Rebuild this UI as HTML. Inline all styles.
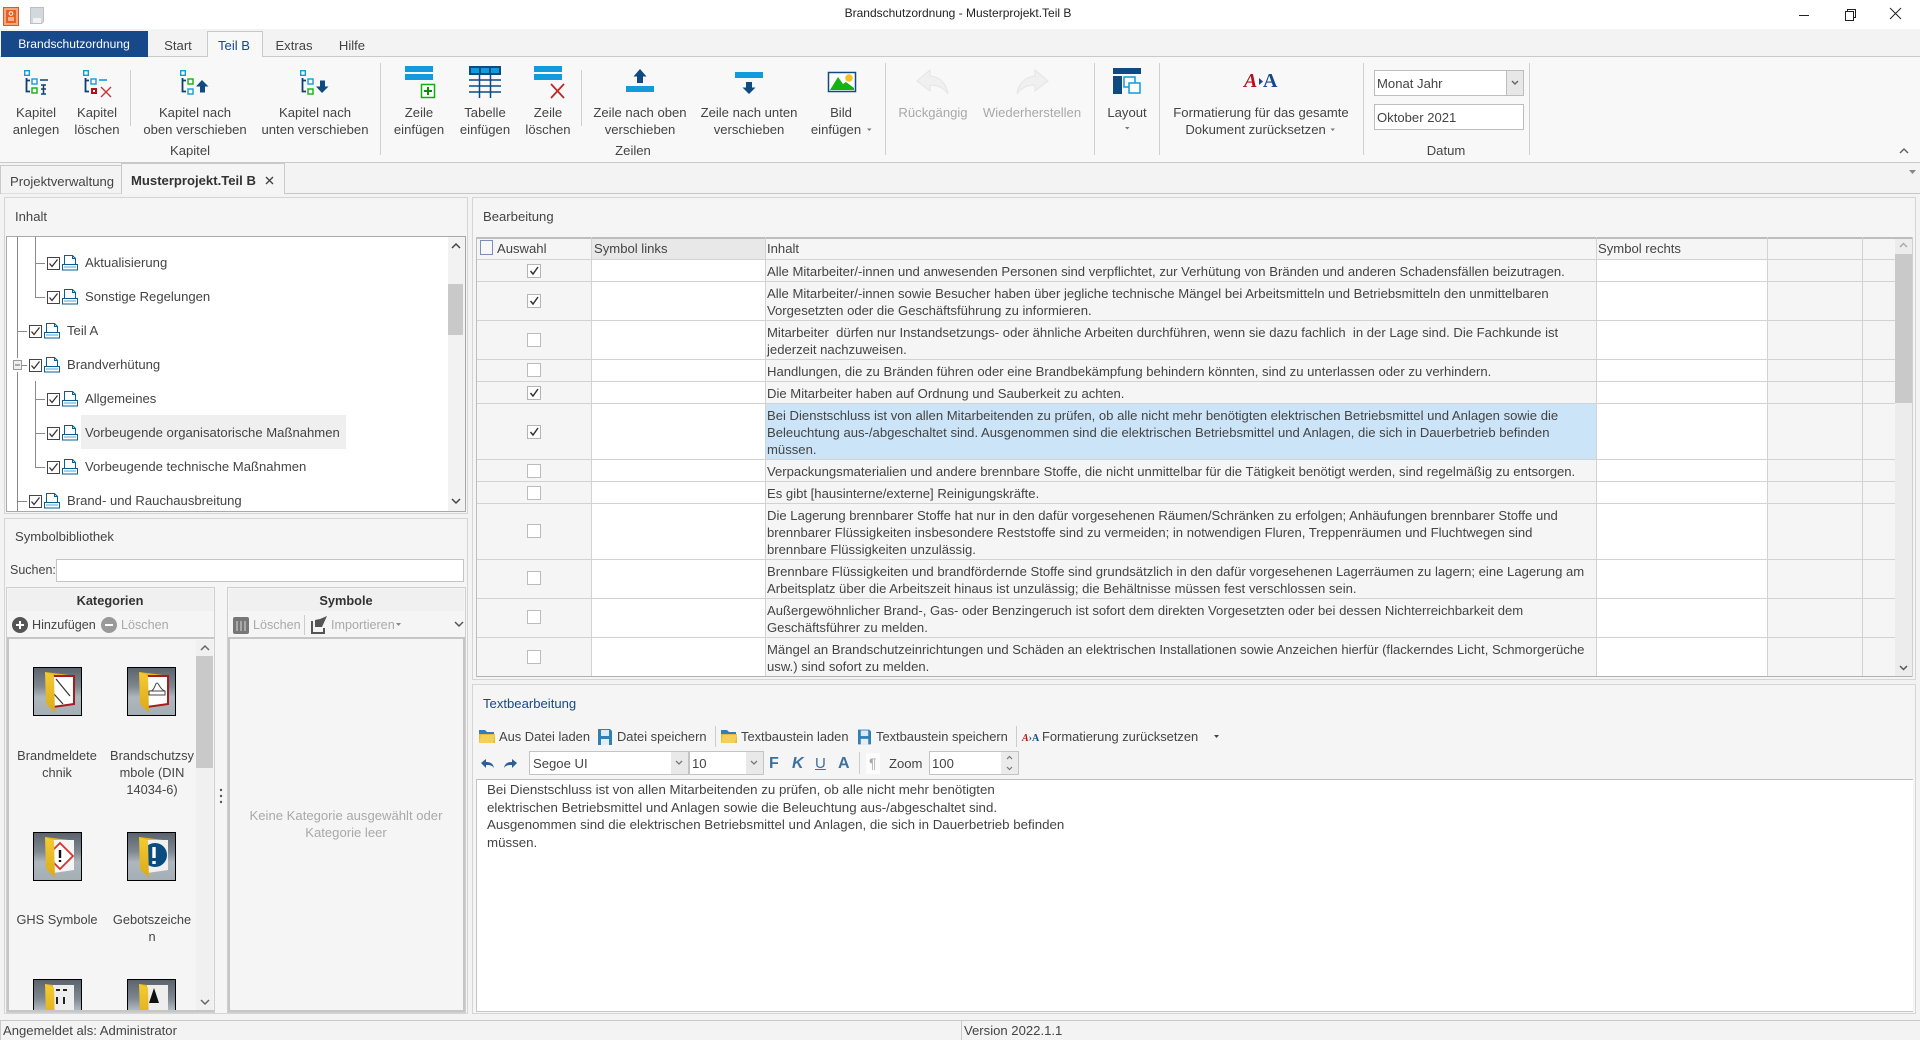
<!DOCTYPE html>
<html lang="de"><head><meta charset="utf-8"><title>Brandschutzordnung - Musterprojekt.Teil B</title>
<style>
html,body{margin:0;padding:0;width:1920px;height:1040px;overflow:hidden;background:#f3f3f3}
body{position:relative;font-family:"Liberation Sans",sans-serif;font-size:13.1px;color:#444}
svg.bg{position:absolute;left:0;top:0}
.t{position:absolute;white-space:nowrap;line-height:17px}
.c{transform:translateX(-50%);text-align:center}
.g{color:#a9a9a9}
.d{color:#333}
.b{font-weight:bold}
</style></head><body>
<svg class="bg" width="1920" height="1040" viewBox="0 0 1920 1040">
<defs>
<symbol id="on" viewBox="0 0 14 14" overflow="visible"><rect x=".5" y=".5" width="13" height="13" fill="#fff" stroke="#b5b5b5"/><path d="M3.5 7l2.5 3 5-7" fill="none" stroke="#333" stroke-width="1.5"/></symbol>
<symbol id="off" viewBox="0 0 14 14"><rect x=".5" y=".5" width="13" height="13" fill="#fff" stroke="#bbb"/></symbol>
<symbol id="tc" viewBox="0 0 13 13"><rect x=".5" y=".5" width="12" height="12" fill="#fff" stroke="#444"/><path d="M2.5 6.5l2.5 3 5.5-7" fill="none" stroke="#333" stroke-width="1.3"/></symbol>
<symbol id="doc" viewBox="0 0 16 16"><path d="M2.5 10V.5h8l3 3V10M10.500.5v3h3" fill="none" stroke="#0d5d92"/><rect x=".5" y="9.5" width="15" height="5.500" fill="#fff" stroke="#0d5d92"/><path d="M2 12h12" stroke="#49a6d4"/></symbol>
<symbol id="tree" viewBox="0 0 14 25"><rect x=".7" y=".7" width="4.6" height="4.6" fill="#fff" stroke="#139bd8" stroke-width="1.4"/><path d="M2.5 8v13.5H6M2.5 10.5H6" fill="none" stroke="#123f72" stroke-width="1.8"/></symbol>
<symbol id="save" viewBox="0 0 14 16"><path d="M0 0h12l2 2v14H0z" fill="#2f7fb8"/><rect x="3" y="1" width="8" height="6" fill="#dceaf5"/><rect x="3" y="10" width="8" height="6" fill="#e6eef5"/></symbol>
<symbol id="fold" viewBox="0 0 16 15"><path d="M0 3V1h6l2 2h7v3H0z" fill="#2f7fb8"/><path d="M0 14V5h16v9z" fill="#e8b93a"/><path d="M0 14l2-8h14l-2 8z" fill="#f5cf5c"/></symbol>
<linearGradient id="fg" x1="0" y1="0" x2="0" y2="1"><stop offset="0" stop-color="#5a636d"/><stop offset=".4" stop-color="#7f8890"/><stop offset=".62" stop-color="#aeb7bd"/><stop offset="1" stop-color="#a4aeb5"/></linearGradient>
<linearGradient id="yg" x1="0" y1="0" x2="0" y2="1"><stop offset="0" stop-color="#f4cb33"/><stop offset="1" stop-color="#dba918"/></linearGradient>
<symbol id="fb" viewBox="0 0 49 49"><rect x=".5" y=".5" width="48" height="48" fill="url(#fg)" stroke="#000"/><path d="M12 5l24 3v2H20z" fill="#e8b91f"/></symbol>
<symbol id="door" viewBox="0 0 49 49"><path d="M12 5l9 3.500 1 37.500-9-9z" fill="url(#yg)"/></symbol>
<clipPath id="lc"><rect x="8" y="640" width="188" height="370"/></clipPath>
</defs>

<!-- chrome backgrounds -->
<rect width="1920" height="29" fill="#fff"/>
<rect y="29" width="1920" height="27" fill="#f3f3f3"/>
<rect y="56" width="1920" height="107" fill="#f8f8f8"/>
<rect y="56" width="1920" height="1" fill="#c9c9c9"/>
<rect y="162" width="1920" height="1" fill="#c9c9c9"/>
<rect y="193" width="1920" height="1" fill="#c9c9c9"/>
<rect x="1" y="31" width="147" height="26" fill="#17488a"/>
<path d="M207.500 57V31.500h55V57" fill="#f8f8f8" stroke="#c9c9c9"/><rect x="208" y="55" width="54" height="3" fill="#f8f8f8"/>

<!-- title icons -->
<rect x="3.500" y="7.500" width="15" height="18" fill="#f4a77e" stroke="#e25a20"/><rect x="6" y="10" width="10" height="13" fill="#e85f22"/><path d="M8 18h6M8 20h6" stroke="#fff"/><circle cx="11" cy="13.500" r="1.800" fill="none" stroke="#fff"/>
<path d="M30.500 7.500h13v14l-2 2h-11z" fill="#d3d8dd" stroke="#b9bfc5"/><rect x="33" y="18" width="8" height="5" fill="#f2f2f2"/>
<!-- window controls -->
<rect x="1799" y="15" width="10" height="1" fill="#222"/>
<path d="M1845.500 11.500h8v9h-8zM1847.500 11.500v-2h8v8h-2" fill="none" stroke="#222"/>
<path d="M1890 8l11 11M1901 8l-11 11" stroke="#222" fill="none"/>

<!-- ribbon separators -->
<g fill="#cfcfcf"><rect x="130" y="70" width="1" height="56"/><rect x="380" y="63" width="1" height="92"/><rect x="581" y="70" width="1" height="56"/><rect x="885" y="63" width="1" height="92"/><rect x="1094" y="63" width="1" height="92"/><rect x="1159" y="63" width="1" height="92"/><rect x="1363" y="63" width="1" height="92"/><rect x="1529" y="63" width="1" height="92"/></g>

<!-- Kapitel anlegen -->
<use href="#tree" x="24" y="70" width="14" height="25"/>
<rect x="32" y="79" width="5" height="5" fill="#fff" stroke="#139bd8" stroke-width="1.400"/><rect x="32" y="88" width="5" height="5" fill="#fff" stroke="#10b10e" stroke-width="1.400"/>
<path d="M40 80h8M41 85h5M43.500 85v9M41 94h5M41 89h5" stroke="#123f72" stroke-width="1.500" fill="none"/>
<!-- Kapitel loeschen -->
<use href="#tree" x="83" y="70" width="14" height="25"/>
<rect x="91" y="79" width="5" height="5" fill="#fff" stroke="#139bd8" stroke-width="1.400"/><rect x="91" y="88" width="6" height="6" fill="#b1101c"/><rect x="93" y="90" width="2" height="2" fill="#fff"/>
<path d="M99 80h8" stroke="#139bd8" stroke-width="1.600"/><path d="M101 87l10 10M111 87l-10 10" stroke="#c33" stroke-width="1.400"/>
<!-- Kapitel hoch -->
<use href="#tree" x="180" y="70" width="14" height="25"/>
<rect x="188" y="79" width="5" height="5" fill="#fff" stroke="#10b10e" stroke-width="1.400"/><rect x="188" y="89" width="5" height="5" fill="#fff" stroke="#139bd8" stroke-width="1.400"/>
<path d="M202 80l6.500 6.500H205v6h-5v-6h-4z" fill="#0f4a80"/>
<!-- Kapitel runter -->
<use href="#tree" x="300" y="70" width="14" height="25"/>
<rect x="308" y="79" width="5" height="5" fill="#fff" stroke="#139bd8" stroke-width="1.400"/><rect x="308" y="89" width="5" height="5" fill="#fff" stroke="#10b10e" stroke-width="1.400"/>
<path d="M322 93l6.500-6.500H325v-6h-5v6h-4z" fill="#0f4a80"/>
<!-- Zeile einfuegen -->
<rect x="405" y="66" width="28" height="6" fill="#119bdc"/><rect x="405" y="74" width="28" height="6" fill="#119bdc"/>
<rect x="421.500" y="84.500" width="13" height="13" fill="#fff" stroke="#0bb10b" stroke-width="1.500"/><path d="M428 87v8M424 91h8" stroke="#0a8f0a" stroke-width="2"/>
<!-- Tabelle -->
<rect x="469" y="66" width="32" height="9" fill="#0f4a80"/><rect x="471" y="68" width="8" height="5" fill="#119bdc"/><rect x="481" y="68" width="8" height="5" fill="#119bdc"/><rect x="491" y="68" width="8" height="5" fill="#119bdc"/>
<path d="M469 80h32M469 86h32M469 92h32" stroke="#0f4a80" stroke-width="1.500"/><path d="M479.500 75v23M490.500 75v23" stroke="#0f4a80" stroke-width="1.500"/>
<!-- Zeile loeschen -->
<rect x="534" y="66" width="28" height="6" fill="#119bdc"/><rect x="534" y="74" width="28" height="6" fill="#119bdc"/>
<path d="M551 84l13 14M564 84l-13 14" stroke="#b92a2a" stroke-width="1.800"/>
<!-- Zeile hoch -->
<rect x="626" y="86" width="28" height="6" fill="#119bdc"/><path d="M640 69l6.500 7.500H643V83h-6v-6.500h-3.500z" fill="#0f4a80"/>
<!-- Zeile runter -->
<rect x="735" y="72" width="28" height="6" fill="#119bdc"/><path d="M749 94l6.500-6.500H752V82h-6v5.500h-3.500z" fill="#0f4a80"/>
<!-- Bild -->
<rect x="828.500" y="72.500" width="27" height="19" fill="#fff" stroke="#0f4a80" stroke-width="1.500"/><path d="M830 90l8-13 5 7 3-2 8 6v2z" fill="#12b312"/><circle cx="849" cy="78" r="3.800" fill="#f4c020"/>
<!-- undo redo -->
<path d="M917 81l13-11v6c11 1 17 9 18 18-4-6-10-9-18-9v6z" fill="#f0f0f0" stroke="#e5e5e5"/>
<path d="M1048 81l-13-11v6c-11 1-17 9-18 18 4-6 10-9 18-9v6z" fill="#f0f0f0" stroke="#e5e5e5"/>
<!-- Layout -->
<rect x="1113" y="68" width="28" height="6" fill="#0f4a80"/><rect x="1113" y="76" width="9" height="18" fill="#0f4a80"/>
<rect x="1124" y="77" width="11" height="10" fill="#fff" stroke="#119bdc" stroke-width="1.500"/><rect x="1129" y="83" width="11" height="10" fill="#fff" stroke="#119bdc" stroke-width="1.500"/>
<path d="M1259 78l4 3.500-4 3.500z" fill="#17488a"/>

<!-- small arrows -->
<path d="M867 128.500h4.500l-2.250 2.500zM1125 127h4.500l-2.250 2.500zM1330.500 128.500h4.500l-2.250 2.500z" fill="#777"/>
<path d="M1900 153l4-4 4 4" fill="none" stroke="#666" stroke-width="1.500"/>
<path d="M1909 170h7l-3.500 4z" fill="#888"/>

<!-- date inputs -->
<rect x="1374.500" y="70.500" width="149" height="25" fill="#fff" stroke="#bdbdbd"/><rect x="1507" y="71" width="16" height="24" fill="#e7e7e7"/><rect x="1506" y="71" width="1" height="24" fill="#bdbdbd"/><path d="M1512 81l3 3 3-3" fill="none" stroke="#666" stroke-width="1.400"/>
<rect x="1374.500" y="104.500" width="149" height="25" fill="#fff" stroke="#bdbdbd"/>

<!-- document tabs -->
<path d="M.5 193.500V165.500h121V193.500" fill="#f3f3f3" stroke="#c9c9c9"/>
<path d="M121.500 194V163.500h163V194" fill="#f5f5f5" stroke="#c9c9c9"/><rect x="122" y="192" width="162" height="3" fill="#f5f5f5"/>
<path d="M266 177l7 7M273 177l-7 7" stroke="#444" stroke-width="1.400"/>

<!-- Inhalt panel -->
<rect x="4.500" y="197.500" width="463" height="316" fill="#f5f5f5" stroke="#d5d5d5"/>
<rect x="6.500" y="236.500" width="459" height="275" fill="#fff" stroke="#a9a9a9"/>
<rect x="448" y="237" width="17" height="274" fill="#f2f2f2"/><rect x="448" y="284" width="15" height="51" fill="#c9c9c9"/>
<path d="M452 248l4-4 4 4M452 499l4 4 4-4" fill="none" stroke="#444" stroke-width="1.500"/>
<rect x="81" y="415" width="265" height="34" fill="#efefef"/>
<g stroke="#8a8a8a" fill="none">
<path d="M17.500 237V358M17.500 372V511M17.500 331.500H27M22 365.500H27M17.500 501.500H27"/>
<path d="M35.500 237V297.500H45M35.500 263.500H45M35.500 381V467.500H45M35.500 399.500H45M35.500 433.500H45"/>
</g>
<rect x="13.500" y="360.500" width="8" height="9" fill="#eee" stroke="#9a9a9a"/><path d="M15 365h5" stroke="#666"/>
<g>
<use href="#tc" x="47" y="257" width="13" height="13"/><use href="#doc" x="62" y="255" width="16" height="16"/>
<use href="#tc" x="47" y="291" width="13" height="13"/><use href="#doc" x="62" y="289" width="16" height="16"/>
<use href="#tc" x="29" y="325" width="13" height="13"/><use href="#doc" x="44" y="323" width="16" height="16"/>
<use href="#tc" x="29" y="359" width="13" height="13"/><use href="#doc" x="44" y="357" width="16" height="16"/>
<use href="#tc" x="47" y="393" width="13" height="13"/><use href="#doc" x="62" y="391" width="16" height="16"/>
<use href="#tc" x="47" y="427" width="13" height="13"/><use href="#doc" x="62" y="425" width="16" height="16"/>
<use href="#tc" x="47" y="461" width="13" height="13"/><use href="#doc" x="62" y="459" width="16" height="16"/>
<use href="#tc" x="29" y="495" width="13" height="13"/><use href="#doc" x="44" y="493" width="16" height="16"/>
</g>

<!-- Symbolbibliothek panel -->
<rect x="4.500" y="518.500" width="463" height="495" fill="#f5f5f5" stroke="#d5d5d5"/>
<rect x="56.500" y="559.500" width="407" height="22" fill="#fff" stroke="#c4c4c4"/>
<rect x="6.500" y="587.500" width="208" height="425" fill="#f5f5f5" stroke="#cfcfcf"/>
<rect x="227.500" y="587.500" width="238" height="425" fill="#f5f5f5" stroke="#cfcfcf"/>
<rect x="8" y="589" width="205" height="22" fill="#f0f0f0"/><rect x="229" y="589" width="235" height="22" fill="#f0f0f0"/>
<g fill="#c6c6c6">
<rect x="7" y="637" width="207" height="2"/><rect x="228" y="637" width="237" height="2"/>
<rect x="7" y="1010" width="207" height="2"/><rect x="228" y="1010" width="237" height="2"/>
<rect x="7" y="638" width="2" height="373"/><rect x="228" y="638" width="2" height="373"/><rect x="463" y="638" width="2" height="373"/>
</g>
<rect x="196" y="640" width="17" height="370" fill="#f0f0f0"/><rect x="196" y="656" width="17" height="112" fill="#c9c9c9"/>
<path d="M201 650l4-4 4 4M201 1000l4 4 4-4" fill="none" stroke="#666" stroke-width="1.500"/>
<circle cx="20" cy="625" r="8" fill="#555"/><path d="M16 625h8M20 621v8" stroke="#fff" stroke-width="2"/>
<circle cx="109" cy="625" r="8" fill="#999"/><path d="M105 625h8" stroke="#fff" stroke-width="2"/>
<rect x="233" y="617" width="16" height="17" rx="2" fill="#777"/><path d="M237 621v10M241 621v10M245 621v10" stroke="#ddd"/>
<rect x="304" y="615" width="1" height="20" fill="#ccc"/>
<path d="M312 621v12h12v-5" fill="none" stroke="#555" stroke-width="2"/><path d="M327 616l-5 11h-7v-7l5-1" fill="#555"/>
<path d="M396 623h5l-2.500 3z" fill="#888"/><path d="M455 622l4 4 4-4" fill="none" stroke="#555" stroke-width="1.500"/>
<circle cx="221" cy="790" r="1.200" fill="#555"/><circle cx="221" cy="796" r="1.200" fill="#555"/><circle cx="221" cy="802" r="1.200" fill="#555"/>

<!-- folder icons -->
<g clip-path="url(#lc)">
<use href="#fb" x="33" y="667" width="49" height="49"/>
<path d="M53 676h21v28l-21 3z" fill="#fff" stroke="#a41c1c" stroke-width="2"/><path d="M56 679l14 17M54 694l9 10" stroke="#333" stroke-width="1.200"/><use href="#door" x="33" y="667" width="49" height="49"/>
<use href="#fb" x="127" y="667" width="49" height="49"/>
<path d="M147 676h21v28l-21 3z" fill="#fff" stroke="#a41c1c" stroke-width="2"/><path d="M151 691c4-1 4-8 6-8s3 7 8 8M149 691h16v4h-16z" fill="none" stroke="#444"/><use href="#door" x="127" y="667" width="49" height="49"/>
<use href="#fb" x="33" y="832" width="49" height="49"/>
<path d="M53 840h21v30l-21 3z" fill="#f5f5f5"/><path d="M60 843l13 13-13 13-13-13z" fill="#fff" stroke="#d8322c" stroke-width="1.800"/><path d="M60 850v8M60 860v2" stroke="#111" stroke-width="2.400"/><use href="#door" x="33" y="832" width="49" height="49"/>
<use href="#fb" x="127" y="832" width="49" height="49"/>
<path d="M147 840h21v30l-21 3z" fill="#f0f0f0"/><circle cx="155" cy="855" r="12" fill="#0b4c80"/><path d="M154 847v11M154 861v3" stroke="#fff" stroke-width="3.400"/><use href="#door" x="127" y="832" width="49" height="49"/>
<use href="#fb" x="33" y="979" width="49" height="49"/>
<path d="M53 985h21v30H53z" fill="#eee"/><path d="M56 990h4M63 990h4M57 997v7M64 997v7" stroke="#222" stroke-width="2"/><use href="#door" x="33" y="979" width="49" height="49"/>
<use href="#fb" x="127" y="979" width="49" height="49"/>
<path d="M147 985h21v30h-21z" fill="#eee"/><path d="M154 988l5 15h-10z" fill="#111"/><use href="#door" x="127" y="979" width="49" height="49"/>
</g>

<!-- Bearbeitung panel -->
<rect x="472.500" y="197.500" width="1443" height="482" fill="#f5f5f5" stroke="#d5d5d5"/>
<rect x="476" y="237" width="1419" height="439" fill="#f5f5f5"/>
<rect x="476" y="237" width="1436" height="2" fill="#bdbdbd"/>
<rect x="592" y="259" width="173" height="417" fill="#fff"/>
<rect x="1597" y="259" width="170" height="417" fill="#fff"/>
<rect x="592" y="239" width="173" height="20" fill="#e8e8e8"/>
<rect x="766" y="404" width="830" height="55" fill="#cce4f7"/>
<g fill="#d2d2d2">
<rect x="476" y="259" width="1419" height="1"/><rect x="476" y="281" width="1419" height="1"/><rect x="476" y="320" width="1419" height="1"/><rect x="476" y="359" width="1419" height="1"/><rect x="476" y="381" width="1419" height="1"/><rect x="476" y="403" width="1419" height="1"/><rect x="476" y="459" width="1419" height="1"/><rect x="476" y="481" width="1419" height="1"/><rect x="476" y="503" width="1419" height="1"/><rect x="476" y="559" width="1419" height="1"/><rect x="476" y="598" width="1419" height="1"/><rect x="476" y="637" width="1419" height="1"/>
<rect x="591" y="237" width="1" height="439"/><rect x="765" y="237" width="1" height="439"/><rect x="1596" y="237" width="1" height="439"/><rect x="1767" y="237" width="1" height="439"/><rect x="1862" y="237" width="1" height="439"/>
</g>
<rect x="476" y="676" width="1436" height="1" fill="#b0b0b0"/><rect x="476" y="237" width="1" height="440" fill="#bdbdbd"/><rect x="1912" y="237" width="1" height="440" fill="#d0d0d0"/>
<rect x="1895" y="239" width="17" height="437" fill="#ececec"/><rect x="1895" y="254" width="17" height="149" fill="#c9c9c9"/>
<path d="M1900 247l3.500-3.500 3.500 3.500" fill="none" stroke="#aaa" stroke-width="1.500"/><path d="M1900 666l3.500 3.500 3.500-3.500" fill="none" stroke="#555" stroke-width="1.500"/>
<rect x="480.500" y="240.500" width="12" height="14" fill="#f5f7fb" stroke="#7a8fb5"/>
<use href="#on" x="527" y="264" width="14" height="14"/>
<use href="#on" x="527" y="294" width="14" height="14"/>
<use href="#off" x="527" y="333" width="14" height="14"/>
<use href="#off" x="527" y="363" width="14" height="14"/>
<use href="#on" x="527" y="386" width="14" height="14"/>
<use href="#on" x="527" y="425" width="14" height="14"/>
<use href="#off" x="527" y="464" width="14" height="14"/>
<use href="#off" x="527" y="486" width="14" height="14"/>
<use href="#off" x="527" y="524" width="14" height="14"/>
<use href="#off" x="527" y="571" width="14" height="14"/>
<use href="#off" x="527" y="610" width="14" height="14"/>
<use href="#off" x="527" y="650" width="14" height="14"/>

<!-- Textbearbeitung panel -->
<rect x="472.500" y="684.500" width="1443" height="329" fill="#f5f5f5" stroke="#d5d5d5"/>
<rect x="476" y="779" width="1437" height="233" fill="#fff"/><rect x="476" y="779" width="1437" height="1" fill="#bdbdbd"/><rect x="476" y="1011" width="1437" height="1" fill="#c5c5c5"/><rect x="476" y="779" width="1" height="233" fill="#c5c5c5"/>
<use href="#fold" x="479" y="729" width="16" height="15"/>
<use href="#save" x="598" y="729" width="14" height="16"/>
<rect x="715" y="726" width="1" height="21" fill="#ccc"/>
<use href="#fold" x="721" y="729" width="16" height="15"/>
<use href="#save" x="858" y="729" width="13" height="16"/>
<rect x="1016" y="726" width="1" height="21" fill="#ccc"/>
<path d="M1214 735h5l-2.500 3z" fill="#444"/>
<path d="M481 763l5-4v3c4 0 7 1 8 6-2-3-5-3-8-3v3z" fill="#2b5f95"/>
<path d="M517 763l-5-4v3c-4 0-7 1-8 6 2-3 5-3 8-3v3z" fill="#2b5f95"/>
<rect x="529.500" y="751.500" width="159" height="23" fill="#fff" stroke="#c4c4c4"/><rect x="671" y="752" width="17" height="22" fill="#e9e9e9"/><path d="M676 761l3 3 3-3" fill="none" stroke="#777" stroke-width="1.300"/>
<rect x="689.500" y="751.500" width="74" height="23" fill="#fff" stroke="#c4c4c4"/><rect x="746" y="752" width="17" height="22" fill="#e9e9e9"/><path d="M751 761l3 3 3-3" fill="none" stroke="#777" stroke-width="1.300"/>
<rect x="859" y="752" width="1" height="22" fill="#ccc"/>
<rect x="866" y="753" width="14" height="21" fill="#fcfcfc"/>
<rect x="929.500" y="751.500" width="89" height="23" fill="#fff" stroke="#c4c4c4"/><rect x="1001" y="752" width="17" height="22" fill="#ebebeb"/><path d="M1007 759l2.500-2.500 2.500 2.500M1007 767l2.500 2.500 2.500-2.500" fill="none" stroke="#777" stroke-width="1.200"/>

<!-- status bar -->
<rect y="1020" width="1920" height="20" fill="#f3f3f3"/><rect y="1020" width="1920" height="1" fill="#c9c9c9"/><rect x="0" y="1020" width="1" height="20" fill="#c9c9c9"/><rect x="961" y="1020" width="1" height="20" fill="#c9c9c9"/>
</svg>

<!-- title + tabs -->
<div class="t c" style="left:958px;top:5px;color:#222;font-size:12px">Brandschutzordnung - Musterprojekt.Teil B</div>
<div class="t c" style="left:74px;top:36px;color:#fff;font-size:12.1px">Brandschutzordnung</div>
<div class="t c" style="left:178px;top:37px">Start</div>
<div class="t c" style="left:234px;top:37px;color:#17488a">Teil B</div>
<div class="t c" style="left:294px;top:37px">Extras</div>
<div class="t c" style="left:352px;top:37px">Hilfe</div>

<!-- ribbon labels -->
<div class="t c" style="left:36px;top:104px">Kapitel<br>anlegen</div>
<div class="t c" style="left:97px;top:104px">Kapitel<br>löschen</div>
<div class="t c" style="left:195px;top:104px">Kapitel nach<br>oben verschieben</div>
<div class="t c" style="left:315px;top:104px">Kapitel nach<br>unten verschieben</div>
<div class="t c" style="left:419px;top:104px">Zeile<br>einfügen</div>
<div class="t c" style="left:485px;top:104px">Tabelle<br>einfügen</div>
<div class="t c" style="left:548px;top:104px">Zeile<br>löschen</div>
<div class="t c" style="left:640px;top:104px">Zeile nach oben<br>verschieben</div>
<div class="t c" style="left:749px;top:104px">Zeile nach unten<br>verschieben</div>
<div class="t c" style="left:841px;top:104px">Bild<br><span style="margin-right:10px">einfügen</span></div>
<div class="t c g" style="left:933px;top:104px">Rückgängig</div>
<div class="t c g" style="left:1032px;top:104px">Wiederherstellen</div>
<div class="t c" style="left:1127px;top:104px">Layout</div>
<div class="t c" style="left:1261px;top:104px">Formatierung für das gesamte<br>Dokument zurücksetzen&nbsp;&nbsp;&nbsp;</div>
<div class="t c" style="left:190px;top:142px">Kapitel</div>
<div class="t c" style="left:633px;top:142px">Zeilen</div>
<div class="t c" style="left:1446px;top:142px">Datum</div>
<div class="t" style="left:1377px;top:75px">Monat Jahr</div>
<div class="t" style="left:1377px;top:109px">Oktober 2021</div>
<div class="t" style="left:1263px;top:69px;font-family:'Liberation Serif',serif;font-size:20px;line-height:24px;font-weight:bold;color:#17488a">A</div>
<div class="t" style="left:1244px;top:69px;font-family:'Liberation Serif',serif;font-size:20px;line-height:24px;font-weight:bold;font-style:italic;color:#b3121d">A</div>

<!-- doc tabs -->
<div class="t" style="left:10px;top:173px">Projektverwaltung</div>
<div class="t b" style="left:131px;top:172px;color:#333">Musterprojekt.Teil B</div>

<!-- Inhalt -->
<div class="t" style="left:15px;top:208px">Inhalt</div>
<div class="t" style="left:85px;top:254px">Aktualisierung</div>
<div class="t" style="left:85px;top:288px">Sonstige Regelungen</div>
<div class="t" style="left:67px;top:322px">Teil A</div>
<div class="t" style="left:67px;top:356px">Brandverhütung</div>
<div class="t" style="left:85px;top:390px">Allgemeines</div>
<div class="t" style="left:85px;top:424px">Vorbeugende organisatorische Maßnahmen</div>
<div class="t" style="left:85px;top:458px">Vorbeugende technische Maßnahmen</div>
<div class="t" style="left:67px;top:492px">Brand- und Rauchausbreitung</div>

<!-- Symbolbibliothek -->
<div class="t" style="left:15px;top:528px">Symbolbibliothek</div>
<div class="t" style="left:10px;top:562px;font-size:12.5px">Suchen:</div>
<div class="t c b" style="left:110px;top:592px;color:#333;font-size:12.8px">Kategorien</div>
<div class="t c b" style="left:346px;top:592px;color:#333;font-size:12.8px">Symbole</div>
<div class="t" style="left:32px;top:617px;font-size:12.6px">Hinzufügen</div>
<div class="t g" style="left:121px;top:617px;font-size:12.6px">Löschen</div>
<div class="t g" style="left:253px;top:617px;font-size:12.6px">Löschen</div>
<div class="t g" style="left:331px;top:617px;font-size:12.6px">Importieren</div>
<div class="t c" style="left:57px;top:747px;font-size:12.8px">Brandmeldete<br>chnik</div>
<div class="t c" style="left:152px;top:747px;font-size:12.8px">Brandschutzsy<br>mbole (DIN<br>14034-6)</div>
<div class="t c" style="left:57px;top:911px;font-size:12.8px">GHS Symbole</div>
<div class="t c" style="left:152px;top:911px;font-size:12.8px">Gebotszeiche<br>n</div>
<div class="t c g" style="left:346px;top:807px">Keine Kategorie ausgewählt oder<br>Kategorie leer</div>

<!-- Bearbeitung -->
<div class="t" style="left:483px;top:208px">Bearbeitung</div>
<div class="t" style="left:497px;top:240px">Auswahl</div>
<div class="t" style="left:594px;top:240px">Symbol links</div>
<div class="t" style="left:767px;top:240px">Inhalt</div>
<div class="t" style="left:1598px;top:240px">Symbol rechts</div>
<div class="t" style="left:767px;top:263px">Alle Mitarbeiter/-innen und anwesenden Personen sind verpflichtet, zur Verhütung von Bränden und anderen Schadensfällen beizutragen.</div>
<div class="t" style="left:767px;top:285px">Alle Mitarbeiter/-innen sowie Besucher haben über jegliche technische Mängel bei Arbeitsmitteln und Betriebsmitteln den unmittelbaren<br>Vorgesetzten oder die Geschäftsführung zu informieren.</div>
<div class="t" style="left:767px;top:324px">Mitarbeiter&nbsp; dürfen nur Instandsetzungs- oder ähnliche Arbeiten durchführen, wenn sie dazu fachlich&nbsp; in der Lage sind. Die Fachkunde ist<br>jederzeit nachzuweisen.</div>
<div class="t" style="left:767px;top:363px">Handlungen, die zu Bränden führen oder eine Brandbekämpfung behindern könnten, sind zu unterlassen oder zu verhindern.</div>
<div class="t" style="left:767px;top:385px">Die Mitarbeiter haben auf Ordnung und Sauberkeit zu achten.</div>
<div class="t" style="left:767px;top:407px">Bei Dienstschluss ist von allen Mitarbeitenden zu prüfen, ob alle nicht mehr benötigten elektrischen Betriebsmittel und Anlagen sowie die<br>Beleuchtung aus-/abgeschaltet sind. Ausgenommen sind die elektrischen Betriebsmittel und Anlagen, die sich in Dauerbetrieb befinden<br>müssen.</div>
<div class="t" style="left:767px;top:463px">Verpackungsmaterialien und andere brennbare Stoffe, die nicht unmittelbar für die Tätigkeit benötigt werden, sind regelmäßig zu entsorgen.</div>
<div class="t" style="left:767px;top:485px">Es gibt [hausinterne/externe] Reinigungskräfte.</div>
<div class="t" style="left:767px;top:507px">Die Lagerung brennbarer Stoffe hat nur in den dafür vorgesehenen Räumen/Schränken zu erfolgen; Anhäufungen brennbarer Stoffe und<br>brennbarer Flüssigkeiten insbesondere Reststoffe sind zu vermeiden; in notwendigen Fluren, Treppenräumen und Fluchtwegen sind<br>brennbare Flüssigkeiten unzulässig.</div>
<div class="t" style="left:767px;top:563px">Brennbare Flüssigkeiten und brandfördernde Stoffe sind grundsätzlich in den dafür vorgesehenen Lagerräumen zu lagern; eine Lagerung am<br>Arbeitsplatz über die Arbeitszeit hinaus ist unzulässig; die Behältnisse müssen fest verschlossen sein.</div>
<div class="t" style="left:767px;top:602px">Außergewöhnlicher Brand-, Gas- oder Benzingeruch ist sofort dem direkten Vorgesetzten oder bei dessen Nichterreichbarkeit dem<br>Geschäftsführer zu melden.</div>
<div class="t" style="left:767px;top:641px">Mängel an Brandschutzeinrichtungen und Schäden an elektrischen Installationen sowie Anzeichen hierfür (flackerndes Licht, Schmorgerüche<br>usw.) sind sofort zu melden.</div>

<!-- Textbearbeitung -->
<div class="t" style="left:483px;top:695px;color:#17488a">Textbearbeitung</div>
<div class="t" style="left:499px;top:728px;font-size:12.9px">Aus Datei laden</div>
<div class="t" style="left:617px;top:728px;font-size:12.9px">Datei speichern</div>
<div class="t" style="left:741px;top:728px;font-size:12.9px">Textbaustein laden</div>
<div class="t" style="left:876px;top:728px;font-size:12.9px">Textbaustein speichern</div>
<div class="t" style="left:1022px;top:730px;font-family:'Liberation Serif',serif;font-size:10px;font-weight:bold"><span style="color:#b3121d;font-style:italic">A</span><span style="color:#17488a">›A</span></div>
<div class="t" style="left:1042px;top:728px;font-size:12.9px">Formatierung zurücksetzen</div>
<div class="t" style="left:533px;top:755px">Segoe UI</div>
<div class="t" style="left:692px;top:755px">10</div>
<div class="t b" style="left:769px;top:755px;color:#3f6f9f;font-size:16px">F</div>
<div class="t b" style="left:792px;top:755px;color:#3f6f9f;font-size:16px;font-style:italic">K</div>
<div class="t b" style="left:815px;top:755px;color:#3f6f9f;font-size:15px;text-decoration:underline;font-weight:normal">U</div>
<div class="t b" style="left:838px;top:755px;color:#3f6f9f;font-size:16px">A</div>
<div class="t" style="left:869px;top:755px;color:#aaa;font-size:14px">¶</div>
<div class="t" style="left:889px;top:755px">Zoom</div>
<div class="t" style="left:932px;top:755px">100</div>
<div class="t" style="left:487px;top:781px;line-height:17.500px;font-size:13.3px">Bei Dienstschluss ist von allen Mitarbeitenden zu prüfen, ob alle nicht mehr benötigten<br>elektrischen Betriebsmittel und Anlagen sowie die Beleuchtung aus-/abgeschaltet sind.<br>Ausgenommen sind die elektrischen Betriebsmittel und Anlagen, die sich in Dauerbetrieb befinden<br>müssen.</div>

<!-- status -->
<div class="t" style="left:3px;top:1022px">Angemeldet als: Administrator</div>
<div class="t" style="left:964px;top:1022px">Version 2022.1.1</div>
</body></html>
